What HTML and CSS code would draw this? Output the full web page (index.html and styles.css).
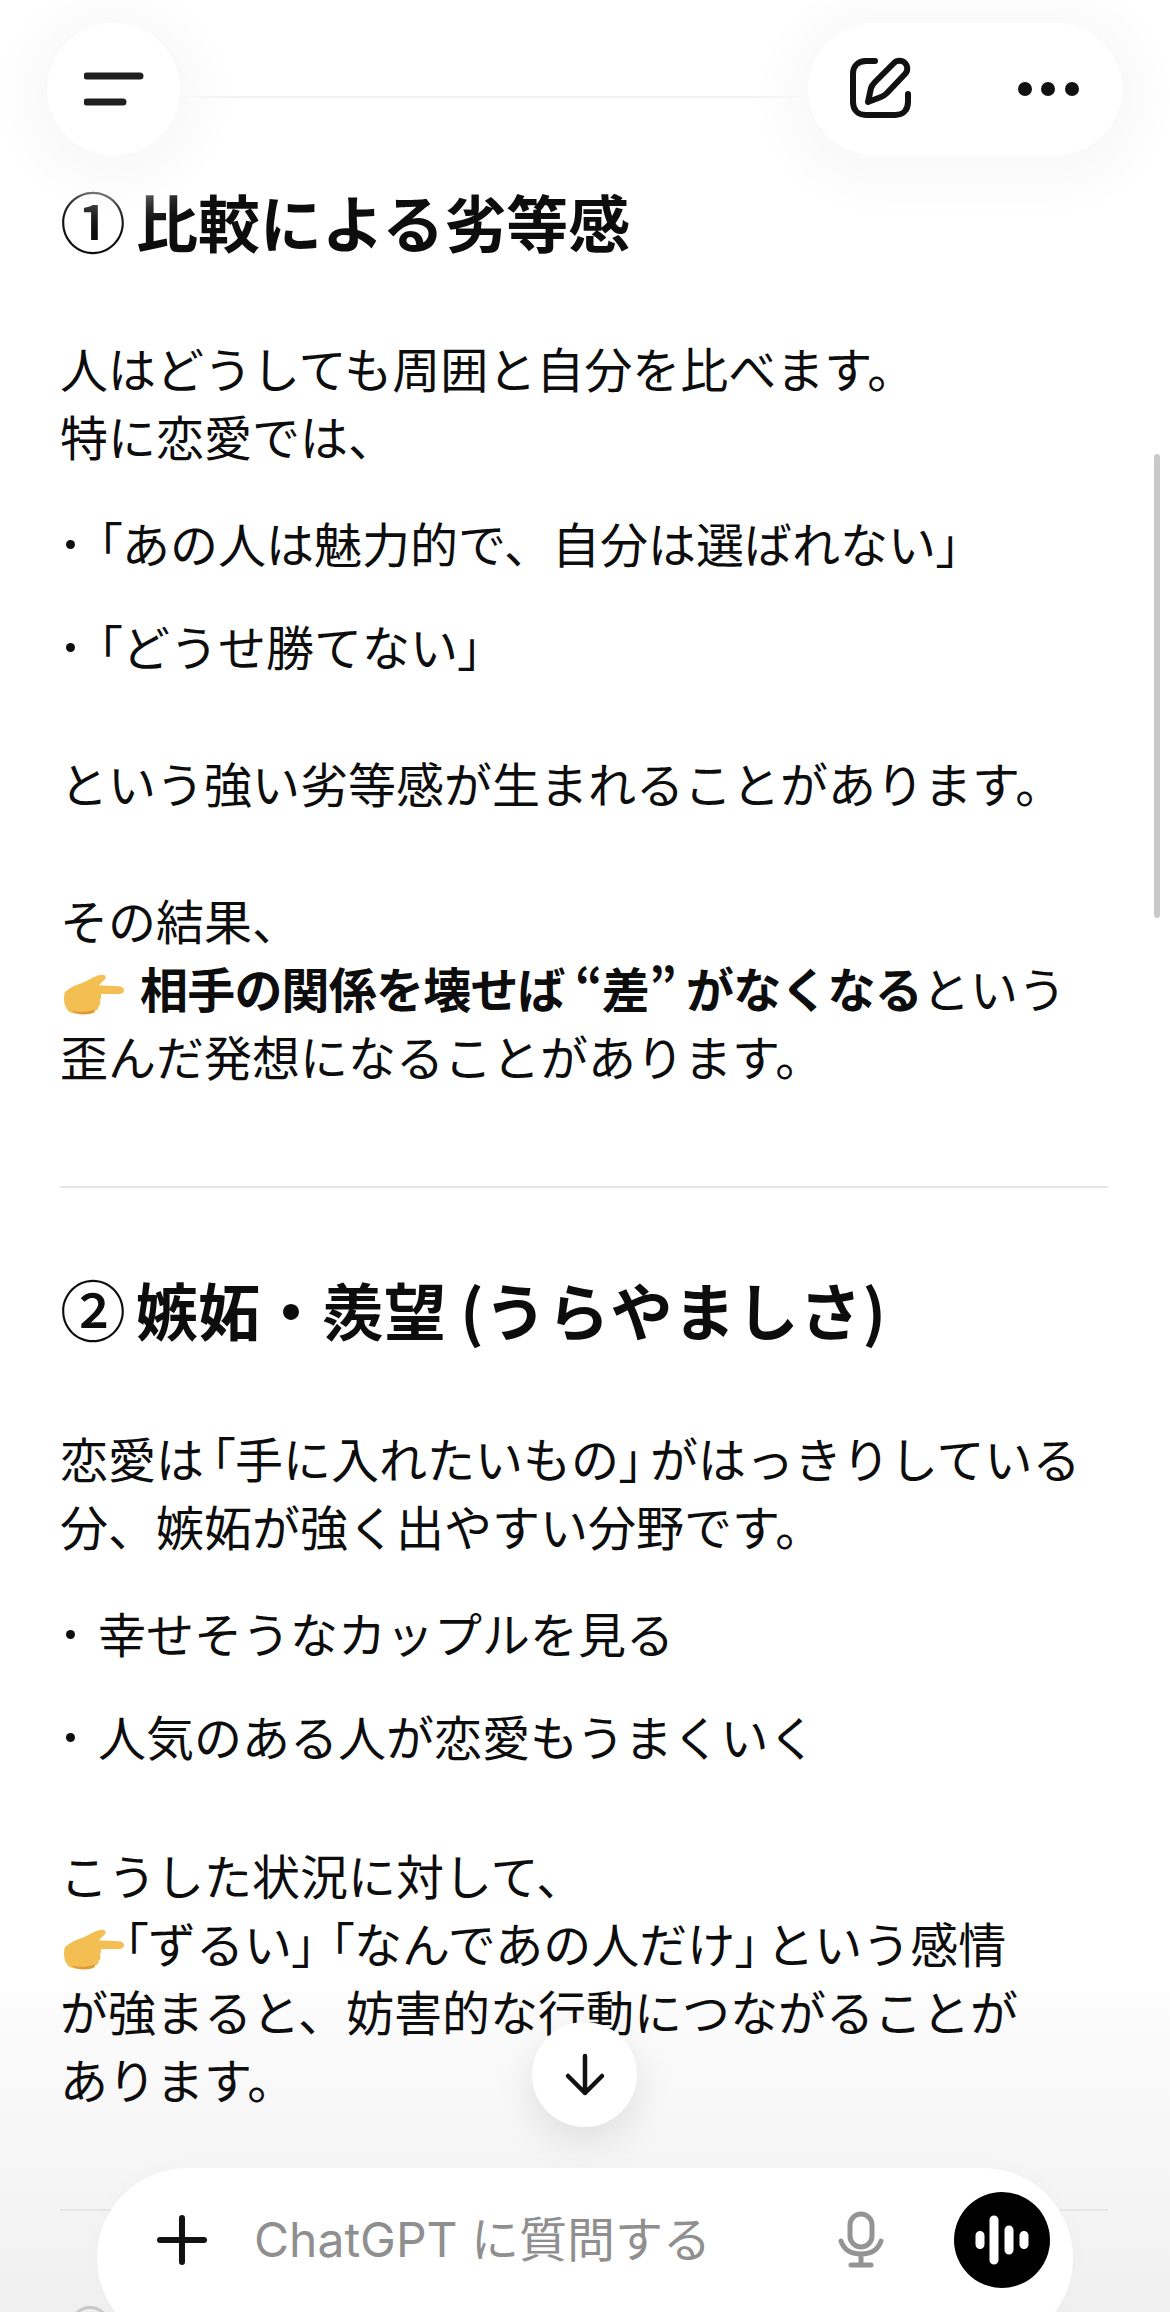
FILE: index.html
```html
<!DOCTYPE html>
<html lang="ja">
<head>
    <meta charset="UTF-8">
    <meta name="viewport" content="width=device-width, initial-scale=1.0">
    <title>ChatGPT</title>
    <link rel="stylesheet" href="styles.css">
</head>
<body>
    <svg class="sprite" width="0" height="0">
        <symbol id="point" viewBox="0 0 62 42">
            <path fill="#f4bf52" d="M1 18C6 13 13 10 20 8c7-3 13-8 20-8 3 0 4 3 2 5l-6 6 20 1c4 0 6 2 6 4s-2 4-6 4H38c1 3 0 5-1 6 1 2 1 5-1 6 0 3-2 5-4 5 0 2-2 3-4 3-10 1-20 1-24-3C0 33-1 24 1 18z"/>
            <path fill="#dd9a35" d="M8 37c7 2 15 2 24-1l-1 3c-7 3-18 3-23-2z"/>
        </symbol>
    </svg>

    <div class="bottom-fade"></div>

    <main class="thread">
        <h2 class="thread-title"><span class="num">①</span> 比較による劣等感</h2>
        <p class="first">人はどうしても周囲と自分を比べます。<br>特に恋愛では、</p>
        <ul>
            <li><span class="q">「</span>あの人は魅力的で、自分は選ばれない<span class="q">」</span></li>
            <li><span class="q">「</span>どうせ勝てない<span class="q">」</span></li>
        </ul>
        <p class="after-list">という強い劣等感が生まれることがあります。</p>
        <p class="after-list">その結果、<br><svg class="hand hand-wide"><use href="#point"/></svg><strong>相手の関係を壊せば “差” がなくなる</strong>という<br>歪んだ発想になることがあります。</p>
        <hr>
        <h2 class="thread-title"><span class="num">②</span> 嫉妬・羨望 <span class="aside">(うらやましさ)</span></h2>
        <p class="first">恋愛は<span class="q open">「</span>手に入れたいもの<span class="q close">」</span>がはっきりしている<br>分、嫉妬が強く出やすい分野です。</p>
        <ul>
            <li>幸せそうなカップルを見る</li>
            <li>人気のある人が恋愛もうまくいく</li>
        </ul>
        <p class="after-list tail">こうした状況に対して、<br><svg class="hand"><use href="#point"/></svg><span class="q">「</span>ずるい<span class="q close">」</span><span class="q open">「</span>なんであの人だけ<span class="q close">」</span>という感情<br>が強まると、妨害的な行動につながることが<br>あります。</p>
        <hr>
    </main>
    <div class="scrollbar"></div>

    <!-- top bar floats over the thread -->
    <div class="top-rule"></div>
    <button class="float-btn menu-btn" aria-label="menu">
        <svg width="60" height="34" viewBox="0 0 60 34"><path d="M3 4h53M3 30h36" stroke="#1f1f1f" stroke-width="7" stroke-linecap="round"/></svg>
    </button>
    <div class="float-btn actions">
        <svg width="64" height="64" viewBox="0 0 64 64" fill="none" stroke="#111" stroke-width="6" stroke-linecap="round" stroke-linejoin="round">
            <path d="M26 4H17C9 4 4 9 4 17v28c0 8 5 13 13 13h29c8 0 13-5 13-13V37"/>
            <path d="M19 45l3-14c1-3 2-4 4-6L45 6c3-3 8-3 11 0s3 8 0 11L38 36c-2 2-3 3-6 4z"/>
        </svg>
        <svg width="62" height="16" viewBox="0 0 62 16" fill="#111"><circle cx="7" cy="8" r="7"/><circle cx="30" cy="8" r="7"/><circle cx="54" cy="8" r="7"/></svg>
    </div>

    <!-- bottom composer -->
    <div class="ring"></div>
    <button class="scroll-btn" aria-label="down">
        <svg width="44" height="44" viewBox="0 0 44 44" fill="none" stroke="#111" stroke-width="4.5" stroke-linecap="round" stroke-linejoin="round"><path d="M22 3v37M5 23l17 17 17-17"/></svg>
    </button>
    <div class="composer">
        <svg class="plus" width="50" height="50" viewBox="0 0 50 50"><path d="M25 3v44M3 25h44" stroke="#111" stroke-width="6" stroke-linecap="round"/></svg>
        <span class="placeholder">ChatGPT に質問する</span>
        <svg class="mic" width="46" height="58" viewBox="0 0 46 58" fill="none" stroke="#949494" stroke-width="5" stroke-linecap="round"><rect x="12" y="3" width="22" height="33" rx="11"/><path d="M3 30c3 9 10 13 20 13s17-4 20-13M23 43v10M13 54h20"/></svg>
        <button class="voice-btn" aria-label="voice">
            <svg width="56" height="50" viewBox="0 0 56 50" stroke="#fff" stroke-width="9" stroke-linecap="round"><path d="M6 20.500v9M20 5v40M35 15v20M50 20.500v9"/></svg>
        </button>
    </div>
</body>
</html>
```

FILE: styles.css
```css
html, body {
    margin: 0;
    height: 2312px;
    overflow: hidden;
    background: #fff;
}
body {
    position: relative;
    font-family: "Noto Sans CJK JP", "Noto Sans", sans-serif;
    color: #0d0d0d;
}
button {
    border: none;
    padding: 0;
    background: #fff;
}
.sprite {
    position: absolute;
}

.thread {
    position: relative;
    padding: 179px 60px 0 60px;
    font-size: 48px;
    line-height: 68px;
}
.thread-title {
    margin: 0;
    font-size: 62px;
    line-height: 80px;
    font-weight: 700;
}
.num {
    font-size: 66px;
    font-weight: 500;
    margin-right: -4px;
}
.aside {
    letter-spacing: 1px;
}
/* corner brackets sit tight against the text */
.q {
    font-feature-settings: "palt";
}
.q.open {
    margin-left: 7px;
}
.q.close {
    margin-right: 7px;
}
.thread p {
    margin: 0;
}
.thread strong {
    font-weight: 700;
    letter-spacing: -0.8px;
}
.thread .first {
    margin-top: 72px;
}
.thread hr + .thread-title + .first {
    margin-top: 74px;
}
.thread .after-list {
    margin-top: 69px;
}
.thread .tail {
    margin-top: 71px;
}
.thread ul {
    list-style: none;
    margin: 39px 0 0;
    padding: 0;
}
.thread li {
    position: relative;
    padding-left: 38px;
    margin-top: 35px;
}
.thread li::before {
    content: "";
    position: absolute;
    left: 6px;
    top: 32px;
    width: 9px;
    height: 9px;
    border-radius: 50%;
    background: #0d0d0d;
}
.thread hr {
    border: none;
    height: 2px;
    background: #e6e6e6;
    margin: 97px 0 79px;
    width: 1048px;
}
.hand {
    width: 60px;
    height: 42px;
    margin-left: 4px;
    vertical-align: -8px;
}
.hand-wide {
    margin-right: 16px;
}

.scrollbar {
    position: absolute;
    right: 10px;
    top: 454px;
    width: 6px;
    height: 464px;
    border-radius: 3px;
    background: #c9c9c9;
}

.top-rule {
    position: absolute;
    left: 180px;
    top: 96px;
    width: 630px;
    height: 2px;
    background: #f1f1f1;
}
.float-btn {
    position: absolute;
    top: 23px;
    height: 132px;
    border-radius: 66px;
    background: #fff;
    box-shadow: 0 8px 40px 30px #fafafa;
}
.menu-btn {
    left: 47px;
    width: 133px;
    display: flex;
    align-items: center;
    justify-content: center;
}
.actions {
    left: 808px;
    width: 314px;
    box-sizing: border-box;
    padding: 0 42px 0 41px;
    display: flex;
    align-items: center;
    justify-content: space-between;
}

/* sits under the thread so the text stays dark over it */
.bottom-fade {
    position: absolute;
    left: 0;
    right: 0;
    bottom: 0;
    height: 320px;
    background: linear-gradient(#fcfcfc, #f0f0f0);
}
.ring {
    position: absolute;
    left: 70px;
    top: 2306px;
    width: 40px;
    height: 40px;
    box-sizing: border-box;
    border: 3px solid #c8c8c8;
    border-radius: 50%;
}
.scroll-btn {
    position: absolute;
    left: 532px;
    top: 2022px;
    width: 105px;
    height: 105px;
    border-radius: 50%;
    display: flex;
    align-items: center;
    justify-content: center;
    box-shadow: 0 14px 40px rgba(0, 0, 0, 0.1);
}
.composer {
    position: absolute;
    left: 97px;
    top: 2168px;
    width: 976px;
    height: 180px;
    box-sizing: border-box;
    padding: 0 23px 36px 60px;
    display: flex;
    align-items: center;
    border-radius: 90px;
    background: #fff;
    box-shadow: 0 0 24px rgba(0, 0, 0, 0.02);
}
.plus {
    flex: none;
}
.placeholder {
    flex: 1;
    margin-left: 47px;
    font-family: Inter, "Noto Sans CJK JP", sans-serif;
    font-size: 48px;
    line-height: 68px;
    color: #8f8f8f;
}
.mic {
    flex: none;
    margin-right: 70px;
}
.voice-btn {
    flex: none;
    width: 96px;
    height: 96px;
    border-radius: 50%;
    background: #000;
    display: flex;
    align-items: center;
    justify-content: center;
}
```
